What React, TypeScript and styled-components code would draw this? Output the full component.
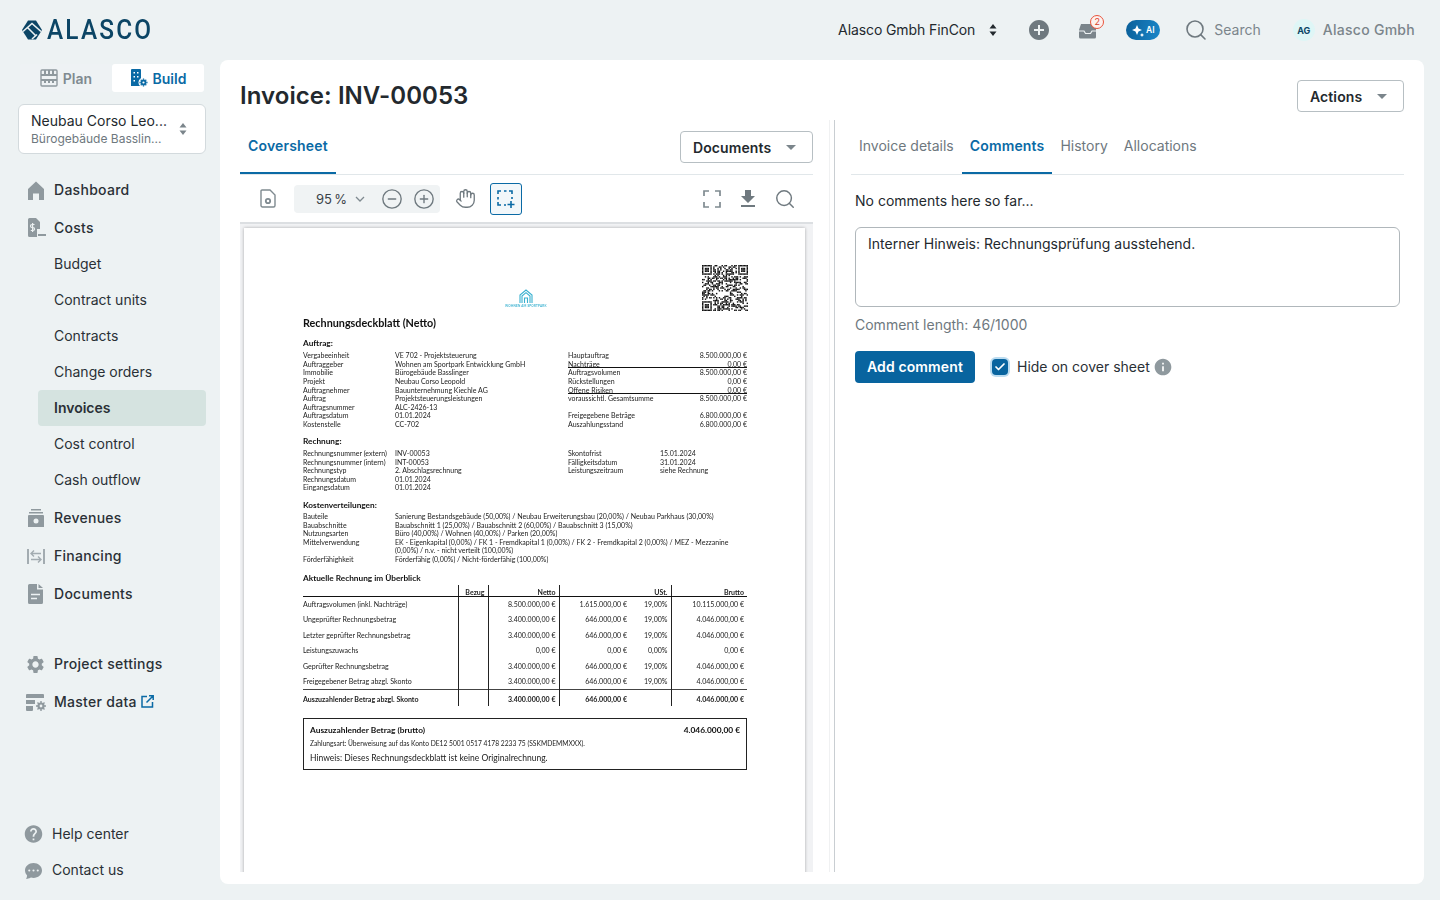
import React from 'react';
import styled, {createGlobalStyle} from 'styled-components';
import {CircleMinus, CirclePlus, Hand, Search, Check} from 'lucide-react';
import {MdSettings, MdHelp, MdInfo, MdFileDownload, MdAddCircle} from 'react-icons/md';
import {BsChatDotsFill} from 'react-icons/bs';

const GlobalStyle = createGlobalStyle`
  html, body {
    margin: 0;
    padding: 0;
    background: #edf2f3;
    font-family: Inter, "Liberation Sans", sans-serif;
    color: #2a3036;
    overflow: hidden;
  }
  * { box-sizing: border-box; }
`

const Shell = styled.div`
  width: 1440px;
  height: 900px;
  display: flex;
  flex-direction: column;
`
const TopBar = styled.header`
  height: 60px;
  flex: none;
  display: flex;
  align-items: center;
  padding: 0 25px 0 22px;
`
const Logo = styled.div`
  display: flex;
  align-items: center;
  gap: 5px;
`
const LogoText = styled.span`
  display: inline-block;
  font-family: Roboto, sans-serif;
  font-size: 28px;
  font-weight: 500;
  letter-spacing: 2.5px;
  color: #0c4565;
  line-height: 30px;
  transform: scaleX(0.87);
  transform-origin: left center;
`
const TopSpacer = styled.div`
  flex: 1;
`
const TopItem = styled.div<{$gap: number}>`
  display: flex;
  align-items: center;
  margin-left: ${p => p.$gap}px;
  position: relative;
`
const AccountName = styled.span`
  font-size: 14px;
  font-weight: 400;
  letter-spacing: -0.1px;
  color: #23292e;
  margin: 0 10px 2px 0;
`
const SortSlot = styled.span`
  width: 16px;
  display: flex;
  justify-content: center;
`
const InboxBadge = styled.span`
  position: absolute;
  top: -6px;
  right: -6px;
  width: 14px;
  height: 14px;
  border-radius: 50%;
  border: 1px solid #e8543c;
  background: #fdf1ee;
  color: #d9432b;
  font-size: 9px;
  line-height: 12px;
  text-align: center;
`
const AiPill = styled.div`
  width: 34px;
  height: 20px;
  border-radius: 10px;
  background: linear-gradient(100deg, #0a5f99, #1b87c9);
  color: #fff;
  display: flex;
  align-items: center;
  justify-content: center;
  gap: 2px;
  font-size: 8.5px;
  font-weight: 600;
`
const SearchLabel = styled.span`
  font-size: 14px;
  color: #7b858b;
  margin: 0 0 2px 6px;
`
const Avatar = styled.span`
  width: 22px;
  height: 22px;
  border-radius: 50%;
  background: #dff6f6;
  color: #0c4565;
  font-size: 9px;
  font-weight: 700;
  display: flex;
  align-items: center;
  justify-content: center;
`
const UserName = styled.span`
  font-size: 14px;
  font-weight: 500;
  letter-spacing: 0.28px;
  color: #7b858b;
  margin: 0 0 2px 8px;
`
const Columns = styled.div`
  flex: 1;
  display: flex;
  min-height: 0;
`
const Sidebar = styled.aside`
  width: 220px;
  flex: none;
  display: flex;
  flex-direction: column;
  padding: 4px 14px 12px 18px;
`
const ModeSwitch = styled.div`
  display: flex;
  margin: 0 2px;
  height: 28px;
`
const ModeTab = styled.div<{$active?: boolean}>`
  flex: 1;
  display: flex;
  align-items: center;
  justify-content: center;
  gap: 5px;
  font-size: 14px;
  font-weight: 600;
  border-radius: 3px;
  color: ${p => p.$active ? '#0a6aa5' : '#7f8a90'};
  background: ${p => p.$active ? '#fff' : '#eef2f4'};
`
const ProjectPicker = styled.div`
  margin-top: 12px;
  height: 50px;
  background: #fff;
  border: 1px solid #d3dadd;
  border-radius: 6px;
  display: flex;
  align-items: center;
  justify-content: space-between;
  padding: 0 18px 0 12px;
`
const ProjectName = styled.div`
  font-size: 14px;
  line-height: 18px;
  color: #23292e;
`
const ProjectSub = styled.div`
  margin-top: 1px;
  font-size: 12px;
  line-height: 16px;
  color: #6e787e;
`
const Nav = styled.nav`
  margin-top: 17px;
  display: flex;
  flex-direction: column;
`
const NavItem = styled.div`
  height: 38px;
  display: flex;
  align-items: center;
  padding-left: 7px;
  gap: 8px;
  font-size: 14px;
  font-weight: 500;
  letter-spacing: 0.28px;
  color: #2a3036;
`
const NavLabel = styled.span`
  margin-bottom: 2px;
  display: inline-flex;
  align-items: center;
  gap: 4px;
`
const NavIcon = styled.span`
  width: 21px;
  display: flex;
  justify-content: center;
  color: #8f999e;
`
const SubList = styled.div`
  margin: -1px 0 1px;
  display: flex;
  flex-direction: column;
`
const SubItem = styled.div<{$active?: boolean}>`
  height: 36px;
  margin-left: 20px;
  padding: 0 0 2px 16px;
  display: flex;
  align-items: center;
  font-size: 14px;
  font-weight: ${p => p.$active ? 600 : 400};
  color: #2a3036;
  border-radius: 4px;
  background: ${p => p.$active ? '#d5e3e0' : 'transparent'};
`
const NavGap = styled.div`
  height: 32px;
`
const SideBottom = styled.div`
  margin-top: auto;
  display: flex;
  flex-direction: column;
`
const HelpItem = styled.div`
  height: 36px;
  display: flex;
  align-items: center;
  gap: 8px;
  padding-left: 5px;
  font-size: 14px;
  color: #2a3036;
`
const Card = styled.main`
  width: 1204px;
  height: 824px;
  background: #fff;
  border-radius: 8px;
  padding: 20px 20px 12px;
  display: flex;
  flex-direction: column;
`
const CardHead = styled.div`
  height: 32px;
  margin-bottom: 8px;
  flex: none;
  display: flex;
  align-items: center;
  justify-content: space-between;
`
const Title = styled.h1`
  margin: 0 0 2px;
  font-size: 24px;
  font-weight: 600;
  letter-spacing: 0.06px;
  color: #23292e;
`
const SelectButton = styled.div<{$width: number}>`
  width: ${p => p.$width}px;
  height: 32px;
  border: 1px solid #b7bfc3;
  border-radius: 4px;
  display: flex;
  align-items: center;
  justify-content: space-between;
  padding: 0 16px 0 12px;
  font-size: 14px;
  font-weight: 600;
  letter-spacing: 0.1px;
  color: #23292e;
  background: #fff;
`
const Caret = styled.span`
  width: 0;
  height: 0;
  border-left: 5px solid transparent;
  border-right: 5px solid transparent;
  border-top: 5px solid #7b858b;
`
const Split = styled.div`
  flex: 1;
  min-height: 0;
  display: grid;
  grid-template-columns: 573px 38px 553px;
`
const Pane = styled.section`
  display: flex;
  flex-direction: column;
  min-height: 0;
`
const Divider = styled.div`
  margin-left: 16px;
  width: 6px;
  border-left: 1px solid #f0f1f2;
  border-right: 1px solid #c9ced2;
`
const TabBar = styled.div`
  height: 55px;
  flex: none;
  display: flex;
  align-items: stretch;
  justify-content: space-between;
  border-bottom: 1px solid #e1e7ea;
`
const Tabs = styled.div`
  display: flex;
`
const Tab = styled.div<{$active?: boolean}>`
  height: 54px;
  padding: 0 8px 2px;
  display: flex;
  align-items: center;
  font-size: 14px;
  font-weight: ${p => p.$active ? 600 : 400};
  letter-spacing: ${p => p.$active ? 0.16 : 0}px;
  color: ${p => p.$active ? '#0a6aa5' : '#6e787e'};
  border-bottom: 2px solid ${p => p.$active ? '#0a6aa5' : 'transparent'};
`
const TabAction = styled.div`
  padding-top: 11px;
`
const ViewerBar = styled.div`
  height: 49px;
  flex: none;
  display: flex;
  align-items: center;
  padding: 0 17px 0 20px;
  color: #6f797f;
  border-bottom: 2px solid #dcdfe2;
`
const ZoomGroup = styled.div`
  margin-left: 18px;
  width: 146px;
  height: 28px;
  background: #f0f3f4;
  border-radius: 4px;
  display: flex;
  align-items: center;
  padding-left: 22px;
  font-size: 13px;
  color: #3a4248;
`
const ZoomCaret = styled.span`
  margin: 0 16px 0 8px;
  display: flex;
  color: #7f8a90;
`
const ToolSlot = styled.span<{$gap: number}>`
  display: flex;
  margin-left: ${p => p.$gap}px;
`
const ActiveTool = styled.span`
  margin-left: 14px;
  width: 32px;
  height: 32px;
  border: 1px solid #0a6aa5;
  border-radius: 3px;
  background: #f2f7fa;
  display: flex;
  align-items: center;
  justify-content: center;
  color: #0a6aa5;
`
const BarRight = styled.div`
  margin-left: auto;
  display: flex;
  align-items: center;
  gap: 14px;
`
const Viewer = styled.div`
  flex: 1;
  min-height: 0;
  overflow: hidden;
  background: #f1f2f4;
  padding: 4px 8px 0 4px;
`
const Sheet = styled.div`
  width: 561px;
  height: 800px;
  background: #fff;
  box-shadow: 0 0 3px rgba(0, 0, 0, 0.3);
  padding: 37px 58px 0 59px;
  font-family: Lato, "Liberation Sans", sans-serif;
  font-size: 7px;
  line-height: 8.55px;
  color: #222;
  white-space: nowrap;
  filter: blur(0.25px);
`
const SheetTop = styled.div`
  height: 46px;
  margin-right: -1px;
  display: flex;
  justify-content: space-between;
`
const SheetLogo = styled.div`
  margin: 24px 0 0 202px;
  display: flex;
  flex-direction: column;
  align-items: center;
  font-size: 3px;
  line-height: 4px;
  letter-spacing: 0.2px;
  font-weight: 700;
  color: #3ab1d0;
`
const SheetTitle = styled.div`
  margin-top: 5px;
  font-size: 10.8px;
  line-height: 13px;
  font-weight: 700;
  color: #111;
`
const SheetHeading = styled.div<{$top: number; $bottom: number}>`
  margin-top: ${p => p.$top}px;
  margin-bottom: ${p => p.$bottom}px;
  font-size: 8.25px;
  line-height: 10px;
  font-weight: 700;
  color: #111;
`
const TwoCols = styled.div`
  display: grid;
  grid-template-columns: 265px 179px;
`
const InfoRow = styled.div`
  display: grid;
  grid-template-columns: 92px 1fr;
  min-height: 8.55px;
`
const SumRow = styled.div<{$line?: boolean}>`
  display: flex;
  justify-content: space-between;
  height: 8.55px;
  border-bottom: ${p => p.$line ? '1px solid #111' : 'none'};
`
const BlankRow = styled.div`
  height: 8.55px;
`
const Table = styled.table`
  width: 444px;
  border-collapse: collapse;
  table-layout: fixed;
  font-size: 7.05px;
  line-height: 8px;
`
const Th = styled.th<{$rule?: boolean}>`
  height: 12px;
  padding: 1px 3px 0;
  font-size: 7px;
  font-weight: 700;
  text-align: right;
  vertical-align: bottom;
  border-bottom: 1px solid #111;
  border-left: ${p => p.$rule ? '1px solid #222' : 'none'};
`
const Td = styled.td<{$rule?: boolean; $left?: boolean; $bold?: boolean; $top?: boolean; $flush?: boolean}>`
  height: ${p => p.$bold ? 16 : 15.5}px;
  padding: ${p => p.$bold ? 3 : 0}px ${p => p.$flush ? 0 : 3}px 0 ${p => p.$left ? 0 : 3}px;
  text-align: ${p => p.$left ? 'left' : 'right'};
  font-weight: ${p => p.$bold ? 700 : 400};
  border-left: ${p => p.$rule ? '1px solid #222' : 'none'};
  border-top: ${p => p.$top ? '1px solid #444' : 'none'};
`
const SumBox = styled.div`
  margin-top: 12px;
  height: 52px;
  border: 1px solid #222;
  padding: 6px 6px 0;
`
const SumBoxHead = styled.div`
  display: flex;
  justify-content: space-between;
  font-size: 8.35px;
  line-height: 11px;
  font-weight: 700;
  color: #111;
`
const SumBoxPay = styled.div`
  font-size: 6.7px;
  line-height: 8px;
  margin-top: 3px;
`
const SumBoxNote = styled.div`
  font-size: 8.5px;
  line-height: 10px;
  margin-top: 6px;
`
const CommentBody = styled.div`
  padding: 0 4px;
  display: flex;
  flex-direction: column;
`
const Empty = styled.p`
  margin: 17px 0 17px;
  font-size: 14px;
  line-height: 18px;
  color: #23292e;
`
const CommentBox = styled.textarea`
  width: 545px;
  height: 80px;
  border: 1px solid #b0b7bb;
  border-radius: 6px;
  padding: 7px 12px;
  font-family: inherit;
  font-size: 14px;
  line-height: 18px;
  color: #23292e;
  resize: none;
  outline: none;
`
const CommentLength = styled.div`
  margin-top: 9px;
  font-size: 14px;
  line-height: 18px;
  color: #6e787e;
`
const FormRow = styled.div`
  margin-top: 17px;
  display: flex;
  align-items: center;
`
const AddButton = styled.button`
  width: 120px;
  height: 32px;
  border: 0;
  border-radius: 4px;
  padding: 0 0 2px;
  background: #08649f;
  color: #fff;
  font-family: inherit;
  font-size: 14px;
  font-weight: 600;
  letter-spacing: 0.12px;
`
const CheckBox = styled.span`
  margin-left: 17px;
  width: 16px;
  height: 16px;
  border-radius: 4px;
  background: #08649f;
  color: #fff;
  display: flex;
  align-items: center;
  justify-content: center;
  box-shadow: 0 0 0 2px #bcdcf0;
`
const CheckLabel = styled.span`
  margin: 0 3px 2px 9px;
  font-size: 14px;
  color: #2a3036;
`
const InfoIcon = styled.span`
  display: flex;
  color: #8f999e;
`

const AlascoMark = () => (
  <svg width="20" height="20" viewBox="0 0 20 20">
    <path d="M6 .5h8l6 9.500-6 9.500H6L0 10z" fill="#0c4565"/>
    <path d="M1 11.500 10 3.500l9 8M5.500 7.500l8 8M10 19l5-4.500" fill="none" stroke="#edf2f3" strokeWidth="1.6"/>
  </svg>
)
const SortIcon = ({color = '#23292e'}: {color?: string}) => (
  <svg width="8" height="14" viewBox="0 0 8 14">
    <path d="M4 1 7.500 5.500h-7zM4 13 .5 8.500h7z" fill={color}/>
  </svg>
)
const InboxIcon = () => (
  <svg width="20" height="18" viewBox="0 0 20 18">
    <path d="M3 3h10l5 3v10a1.500 1.500 0 0 1-1.500 1.500h-14A1.500 1.500 0 0 1 1 16V9z" fill="#7b858b"/>
    <path d="M1 10h5l1.500 2.500h5L14 10h5" fill="none" stroke="#edf2f3" strokeWidth="1.200"/>
  </svg>
)
const SparkIcon = () => (
  <svg width="12" height="13" viewBox="0 0 12 13">
    <path d="M5 1 6.500 4.500 10 6 6.500 7.500 5 11 3.500 7.500 0 6l3.500-1.500zM10 9l.7 1.300L12 11l-1.300.7L10 13l-.7-1.300L8 11l1.300-.7z" fill="#fff"/>
  </svg>
)
const AbacusIcon = () => (
  <svg width="18" height="18" viewBox="0 0 18 18" fill="none" stroke="#8f999e" strokeWidth="1.400">
    <rect x="1" y="1" width="16" height="16" rx="1"/>
    <path d="M1 6h16M1 11h16M5 1v5M9 1v5M13 1v5M5 11v3M9 11v3M13 11v3" strokeWidth="2"/>
  </svg>
)
const BuildIcon = () => (
  <svg width="18" height="18" viewBox="0 0 18 18">
    <path d="M1 1a1 1 0 0 1 1-1h8a1 1 0 0 1 1 1v16H1z" fill="#0a6aa5"/>
    <path d="M3.500 3h1.500v1.500H3.500zM7 3h1.500v1.500H7zM3.500 7h1.500v1.500H3.500zM7 7h1.500v1.500H7zM3.500 11h1.500v1.500H3.500z" fill="#fff"/>
    <circle cx="13.500" cy="13.500" r="5" fill="#fff"/>
    <circle cx="13.500" cy="13.500" r="2" fill="none" stroke="#0a6aa5" strokeWidth="1.800"/>
    <path d="M13.500 9.500v1.200M13.500 16.300v1.200M9.500 13.500h1.200M16.300 13.500h1.200M10.700 10.700l.9.900M15.400 15.400l.9.900M16.300 10.700l-.9.900M11.600 15.400l-.9.900" stroke="#0a6aa5" strokeWidth="1.300"/>
  </svg>
)
const HomeIcon = () => (
  <svg width="18" height="19" viewBox="0 0 18 19">
    <path d="M9 .5 17 8v11h-5v-6.500H6V19H1V8z" fill="#8f999e"/>
  </svg>
)
const CostsIcon = () => (
  <svg width="20" height="20" viewBox="0 0 20 20">
    <path d="M2 1.500A1.500 1.500 0 0 1 3.500 0H10l4 4v7h-3v8H3.500A1.500 1.500 0 0 1 2 17.500z" fill="#8f999e"/>
    <path d="M8.500 6.500H6a1.300 1.300 0 0 0 0 3h1a1.300 1.300 0 0 1 0 3H4.800M6.600 5v9" fill="none" stroke="#edf2f3" strokeWidth="1.200"/>
    <rect x="12" y="16" width="8" height="2" fill="#8f999e"/>
  </svg>
)
const RevenueIcon = () => (
  <svg width="18" height="18" viewBox="0 0 18 18">
    <path d="M4 0h10v1.500H4zM2 3h14v1.500H2z" fill="#8f999e"/>
    <path d="M1 7a1 1 0 0 1 1-1h14a1 1 0 0 1 1 1v11H1z" fill="#8f999e"/>
    <circle cx="9" cy="12" r="2.500" fill="#edf2f3"/>
  </svg>
)
const FinanceIcon = () => (
  <svg width="18" height="15" viewBox="0 0 18 15" fill="none" stroke="#a3acb1" strokeWidth="1.400">
    <path d="M1 0v15M17 0v15" strokeWidth="2"/>
    <path d="M14 4.500H4M7 1.500 4 4.500l3 3M4 10.500h10M11 7.500l3 3-3 3"/>
  </svg>
)
const DocIcon = () => (
  <svg width="15" height="20" viewBox="0 0 15 20">
    <path d="M1.500 0H9v5.500h6v13a1.500 1.500 0 0 1-1.500 1.500h-12A1.500 1.500 0 0 1 0 18.500v-17A1.500 1.500 0 0 1 1.500 0zM10.500 0 15 4h-4.500z" fill="#8f999e"/>
    <path d="M3 10.500h9M3 14.500h6" stroke="#edf2f3" strokeWidth="1.500"/>
  </svg>
)
const MasterIcon = () => (
  <svg width="20" height="17" viewBox="0 0 20 17">
    <path d="M0 1a1 1 0 0 1 1-1h16a1 1 0 0 1 1 1v3H0zM0 6h9v4H0zM0 12h7v4a1 1 0 0 1-1 1H1a1 1 0 0 1-1-1z" fill="#8f999e"/>
    <circle cx="15" cy="12" r="2.500" fill="none" stroke="#8f999e" strokeWidth="2.200"/>
    <path d="M15 7v2M15 15v2M10 12h2M18 12h2M11.500 8.500l1.400 1.400M17.100 14.100l1.400 1.400M18.500 8.500l-1.400 1.400M12.900 14.100l-1.400 1.400" stroke="#8f999e" strokeWidth="1.400"/>
  </svg>
)
const ExternalIcon = () => (
  <svg width="13" height="13" viewBox="0 0 13 13" fill="none" stroke="#0a6aa5" strokeWidth="1.500">
    <path d="M6 1.500H1v10.500h10.500V7M5.500 7.500 12 1M8 .8h4.200V5"/>
  </svg>
)
const FileGearIcon = () => (
  <svg width="16" height="19" viewBox="0 0 16 19" fill="none" stroke="#7f8a90" strokeWidth="1.400">
    <path d="M2 1h8l5 5v10.500a1.500 1.500 0 0 1-1.500 1.500h-11A1.500 1.500 0 0 1 1 16.500V2a1 1 0 0 1 1-1z"/>
    <circle cx="8" cy="12" r="2.200" strokeWidth="1.800"/>
  </svg>
)
const SelectAreaIcon = () => (
  <svg width="18" height="18" viewBox="0 0 18 18" fill="none" stroke="#0a6aa5" strokeWidth="1.600">
    <path d="M1 4V1h3M7 1h2.500M12 1h3v3M15 7v2M1 7v2.500M1 12v3h3M7 15h2"/>
    <path d="M14 11v7M10.500 14.500h7"/>
  </svg>
)
const CornersIcon = () => (
  <svg width="20" height="18" viewBox="0 0 20 18" fill="none" stroke="#7f8a90" strokeWidth="1.700">
    <path d="M2 6V1h5M13 1h5v5M18 12v5h-5M7 17H2v-5"/>
  </svg>
)
const SheetHouse = () => (
  <svg width="14" height="15" viewBox="0 0 14 15" fill="none" stroke="#3ab1d0" strokeWidth="1.100">
    <path d="M1 14V6l6-5 6 5v8"/>
    <path d="M3 14V7l4-3.300L11 7v7"/>
    <path d="M5.500 14V9h3v5"/>
  </svg>
)

// finder patterns are real, the rest of the modules come from a small hash
const QrCode = () => {
  const n = 33
  const origins = [[0, 0], [n - 7, 0], [0, n - 7]]
  const finderOn = (x: number, y: number, ox: number, oy: number) => {
    const dx = x - ox, dy = y - oy
    return dx === 0 || dx === 6 || dy === 0 || dy === 6 || (dx >= 2 && dx <= 4 && dy >= 2 && dy <= 4)
  }
  const cells: React.ReactNode[] = []
  for (let y = 0; y < n; y++) {
    for (let x = 0; x < n; x++) {
      const finder = origins.find(f => x >= f[0] && x < f[0] + 7 && y >= f[1] && y < f[1] + 7)
      const nearFinder = (x < 8 && y < 8) || (x > n - 9 && y < 8) || (x < 8 && y > n - 9)
      let on
      if (finder) on = finderOn(x, y, finder[0], finder[1])
      else if (nearFinder) on = false
      else on = ((x * 73 + y * 151 + x * y * 17) ^ (x * x * 5 + y * 31)) % 7 < 3
      if (on) cells.push(<rect key={x + '-' + y} x={x} y={y} width="1.020" height="1.020"/>)
    }
  }
  return <svg width="46" height="46" viewBox="0 0 33 33" fill="#111">{cells}</svg>
}

const auftrag = [
  ['Vergabeeinheit', 'VE 702 - Projektsteuerung'],
  ['Auftraggeber', 'Wohnen am Sportpark Entwicklung GmbH'],
  ['Immobilie', 'Bürogebäude Basslinger'],
  ['Projekt', 'Neubau Corso Leopold'],
  ['Auftragnehmer', 'Bauunternehmung Kiechle AG'],
  ['Auftrag', 'Projektsteuerungsleistungen'],
  ['Auftragsnummer', 'ALC-2426-13'],
  ['Auftragsdatum', '01.01.2024'],
  ['Kostenstelle', 'CC-702'],
]
const rechnung = [
  ['Rechnungsnummer (extern)', 'INV-00053'],
  ['Rechnungsnummer (intern)', 'INT-00053'],
  ['Rechnungstyp', '2. Abschlagsrechnung'],
  ['Rechnungsdatum', '01.01.2024'],
  ['Eingangsdatum', '01.01.2024'],
]
const termine = [
  ['Skontofrist', '15.01.2024'],
  ['Fälligkeitsdatum', '31.01.2024'],
  ['Leistungszeitraum', 'siehe Rechnung'],
]
const kosten = [
  ['Bauteile', 'Sanierung Bestandsgebäude (50,00%) / Neubau Erweiterungsbau (20,00%) / Neubau Parkhaus (30,00%)'],
  ['Bauabschnitte', 'Bauabschnitt 1 (25,00%) / Bauabschnitt 2 (60,00%) / Bauabschnitt 3 (15,00%)'],
  ['Nutzungsarten', 'Büro (40,00%) / Wohnen (40,00%) / Parken (20,00%)'],
]
const tableRows = [
  ['Auftragsvolumen (inkl. Nachträge)', '8.500.000,00 €', '1.615.000,00 €', '19,00%', '10.115.000,00 €'],
  ['Ungeprüfter Rechnungsbetrag', '3.400.000,00 €', '646.000,00 €', '19,00%', '4.046.000,00 €'],
  ['Letzter geprüfter Rechnungsbetrag', '3.400.000,00 €', '646.000,00 €', '19,00%', '4.046.000,00 €'],
  ['Leistungszuwachs', '0,00 €', '0,00 €', '0,00%', '0,00 €'],
  ['Geprüfter Rechnungsbetrag', '3.400.000,00 €', '646.000,00 €', '19,00%', '4.046.000,00 €'],
  ['Freigegebener Betrag abzgl. Skonto', '3.400.000,00 €', '646.000,00 €', '19,00%', '4.046.000,00 €'],
]
const subItems = ['Budget', 'Contract units', 'Contracts', 'Change orders', 'Invoices', 'Cost control', 'Cash outflow']

function App() {
  return (
    <Shell>
      <GlobalStyle/>
      <TopBar>
        <Logo>
          <AlascoMark/>
          <LogoText>ALASCO</LogoText>
        </Logo>
        <TopSpacer/>
        <TopItem $gap={0}>
          <AccountName>Alasco Gmbh FinCon</AccountName>
          <SortSlot><SortIcon/></SortSlot>
        </TopItem>
        <TopItem $gap={26}><MdAddCircle size={24} color="#6f797f"/></TopItem>
        <TopItem $gap={27}>
          <InboxIcon/>
          <InboxBadge>2</InboxBadge>
        </TopItem>
        <TopItem $gap={28}>
          <AiPill><SparkIcon/>AI</AiPill>
        </TopItem>
        <TopItem $gap={24}>
          <Search size={24} color="#6f797f" strokeWidth={1.6}/>
          <SearchLabel>Search</SearchLabel>
        </TopItem>
        <TopItem $gap={32}>
          <Avatar>AG</Avatar>
          <UserName>Alasco Gmbh</UserName>
        </TopItem>
      </TopBar>
      <Columns>
        <Sidebar>
          <ModeSwitch>
            <ModeTab><AbacusIcon/>Plan</ModeTab>
            <ModeTab $active><BuildIcon/>Build</ModeTab>
          </ModeSwitch>
          <ProjectPicker>
            <div>
              <ProjectName>Neubau Corso Leo...</ProjectName>
              <ProjectSub>Bürogebäude Basslin...</ProjectSub>
            </div>
            <SortIcon color="#7b858b"/>
          </ProjectPicker>
          <Nav>
            <NavItem><NavIcon><HomeIcon/></NavIcon><NavLabel>Dashboard</NavLabel></NavItem>
            <NavItem><NavIcon><CostsIcon/></NavIcon><NavLabel>Costs</NavLabel></NavItem>
            <SubList>
              {subItems.map(item => <SubItem key={item} $active={item === 'Invoices'}>{item}</SubItem>)}
            </SubList>
            <NavItem><NavIcon><RevenueIcon/></NavIcon><NavLabel>Revenues</NavLabel></NavItem>
            <NavItem><NavIcon><FinanceIcon/></NavIcon><NavLabel>Financing</NavLabel></NavItem>
            <NavItem><NavIcon><DocIcon/></NavIcon><NavLabel>Documents</NavLabel></NavItem>
            <NavGap/>
            <NavItem><NavIcon><MdSettings size={21}/></NavIcon><NavLabel>Project settings</NavLabel></NavItem>
            <NavItem><NavIcon><MasterIcon/></NavIcon><NavLabel>Master data<ExternalIcon/></NavLabel></NavItem>
          </Nav>
          <SideBottom>
            <HelpItem><NavIcon><MdHelp size={24}/></NavIcon><NavLabel>Help center</NavLabel></HelpItem>
            <HelpItem><NavIcon><BsChatDotsFill size={17}/></NavIcon><NavLabel>Contact us</NavLabel></HelpItem>
          </SideBottom>
        </Sidebar>
        <Card>
          <CardHead>
            <Title>Invoice: INV-00053</Title>
            <SelectButton $width={107}>Actions<Caret/></SelectButton>
          </CardHead>
          <Split>
            <Pane>
              <TabBar>
                <Tabs><Tab $active>Coversheet</Tab></Tabs>
                <TabAction><SelectButton $width={133}>Documents<Caret/></SelectButton></TabAction>
              </TabBar>
              <ViewerBar>
                <FileGearIcon/>
                <ZoomGroup>
                  95{'\u202f'}%
                  <ZoomCaret>
                    <svg width="10" height="6" viewBox="0 0 10 6" fill="none" stroke="currentColor" strokeWidth="1.300"><path d="M1 1l4 4 4-4"/></svg>
                  </ZoomCaret>
                  <CircleMinus size={22} strokeWidth={1.5} color="#6f797f"/>
                  <ToolSlot $gap={10}><CirclePlus size={22} strokeWidth={1.5} color="#6f797f"/></ToolSlot>
                </ZoomGroup>
                <ToolSlot $gap={15}><Hand size={21} strokeWidth={1.5}/></ToolSlot>
                <ActiveTool><SelectAreaIcon/></ActiveTool>
                <BarRight>
                  <CornersIcon/>
                  <MdFileDownload size={24}/>
                  <Search size={22} strokeWidth={1.6}/>
                </BarRight>
              </ViewerBar>
              <Viewer>
                <Sheet>
                  <SheetTop>
                    <SheetLogo><SheetHouse/>WOHNEN AM SPORTPARK</SheetLogo>
                    <QrCode/>
                  </SheetTop>
                  <SheetTitle>Rechnungsdeckblatt (Netto)</SheetTitle>
                  <SheetHeading $top={9} $bottom={3.4}>Auftrag:</SheetHeading>
                  <TwoCols>
                    <div>
                      {auftrag.map(r => <InfoRow key={r[0]}><span>{r[0]}</span><span>{r[1]}</span></InfoRow>)}
                    </div>
                    <div>
                      <SumRow><span>Hauptauftrag</span><span>8.500.000,00 €</span></SumRow>
                      <SumRow $line><span>Nachträge</span><span>0,00 €</span></SumRow>
                      <SumRow><span>Auftragsvolumen</span><span>8.500.000,00 €</span></SumRow>
                      <SumRow><span>Rückstellungen</span><span>0,00 €</span></SumRow>
                      <SumRow $line><span>Offene Risiken</span><span>0,00 €</span></SumRow>
                      <SumRow><span>voraussichtl. Gesamtsumme</span><span>8.500.000,00 €</span></SumRow>
                      <BlankRow/>
                      <SumRow><span>Freigegebene Beträge</span><span>6.800.000,00 €</span></SumRow>
                      <SumRow><span>Auszahlungsstand</span><span>6.800.000,00 €</span></SumRow>
                    </div>
                  </TwoCols>
                  <SheetHeading $top={7.6} $bottom={3.4}>Rechnung:</SheetHeading>
                  <TwoCols>
                    <div>
                      {rechnung.map(r => <InfoRow key={r[0]}><span>{r[0]}</span><span>{r[1]}</span></InfoRow>)}
                    </div>
                    <div>
                      {termine.map(r => <InfoRow key={r[0]}><span>{r[0]}</span><span>{r[1]}</span></InfoRow>)}
                    </div>
                  </TwoCols>
                  <SheetHeading $top={7.6} $bottom={2.4}>Kostenverteilungen:</SheetHeading>
                  {kosten.map(r => <InfoRow key={r[0]}><span>{r[0]}</span><span>{r[1]}</span></InfoRow>)}
                  <InfoRow>
                    <span>Mittelverwendung</span>
                    <span>EK - Eigenkapital (0,00%) / FK 1 - Fremdkapital 1 (0,00%) / FK 2 - Fremdkapital 2 (0,00%) / MEZ - Mezzanine<br/>(0,00%) / n.v. - nicht verteilt (100,00%)</span>
                  </InfoRow>
                  <InfoRow><span>Förderfähighkeit</span><span>Förderfähig (0,00%) / Nicht-förderfähig (100,00%)</span></InfoRow>
                  <SheetHeading $top={9.6} $bottom={2}>Aktuelle Rechnung im Überblick</SheetHeading>
                  <Table>
                    <colgroup>
                      <col width="155"/><col width="30"/><col width="71"/><col width="68"/><col width="44"/><col width="76"/>
                    </colgroup>
                    <thead>
                      <tr>
                        <Th/>
                        <Th $rule>Bezug</Th>
                        <Th $rule>Netto</Th>
                        <Th $rule/>
                        <Th>USt.</Th>
                        <Th $rule>Brutto</Th>
                      </tr>
                    </thead>
                    <tbody>
                      {tableRows.map(r => (
                        <tr key={r[0]}>
                          <Td $left>{r[0]}</Td>
                          <Td $rule/>
                          <Td $rule>{r[1]}</Td>
                          <Td $rule $flush>{r[2]}</Td>
                          <Td>{r[3]}</Td>
                          <Td $rule>{r[4]}</Td>
                        </tr>
                      ))}
                      <tr>
                        <Td $left $bold $top>Auszuzahlender Betrag abzgl. Skonto</Td>
                        <Td $rule $bold $top/>
                        <Td $rule $bold $top>3.400.000,00 €</Td>
                        <Td $rule $bold $top $flush>646.000,00 €</Td>
                        <Td $bold $top/>
                        <Td $rule $bold $top>4.046.000,00 €</Td>
                      </tr>
                    </tbody>
                  </Table>
                  <SumBox>
                    <SumBoxHead><span>Auszuzahlender Betrag (brutto)</span><span>4.046.000,00 €</span></SumBoxHead>
                    <SumBoxPay>Zahlungsart: Überweisung auf das Konto DE12 5001 0517 4178 2233 75 (SSKMDEMMXXX).</SumBoxPay>
                    <SumBoxNote>Hinweis: Dieses Rechnungsdeckblatt ist keine Originalrechnung.</SumBoxNote>
                  </SumBox>
                </Sheet>
              </Viewer>
            </Pane>
            <Divider/>
            <Pane>
              <TabBar>
                <Tabs>
                  <Tab>Invoice details</Tab>
                  <Tab $active>Comments</Tab>
                  <Tab>History</Tab>
                  <Tab>Allocations</Tab>
                </Tabs>
              </TabBar>
              <CommentBody>
                <Empty>No comments here so far...</Empty>
                <CommentBox readOnly defaultValue="Interner Hinweis: Rechnungsprüfung ausstehend."/>
                <CommentLength>Comment length: 46/1000</CommentLength>
                <FormRow>
                  <AddButton>Add comment</AddButton>
                  <CheckBox><Check size={12} strokeWidth={3.5}/></CheckBox>
                  <CheckLabel>Hide on cover sheet</CheckLabel>
                  <InfoIcon><MdInfo size={20}/></InfoIcon>
                </FormRow>
              </CommentBody>
            </Pane>
          </Split>
        </Card>
      </Columns>
    </Shell>
  );
}

export default App;
